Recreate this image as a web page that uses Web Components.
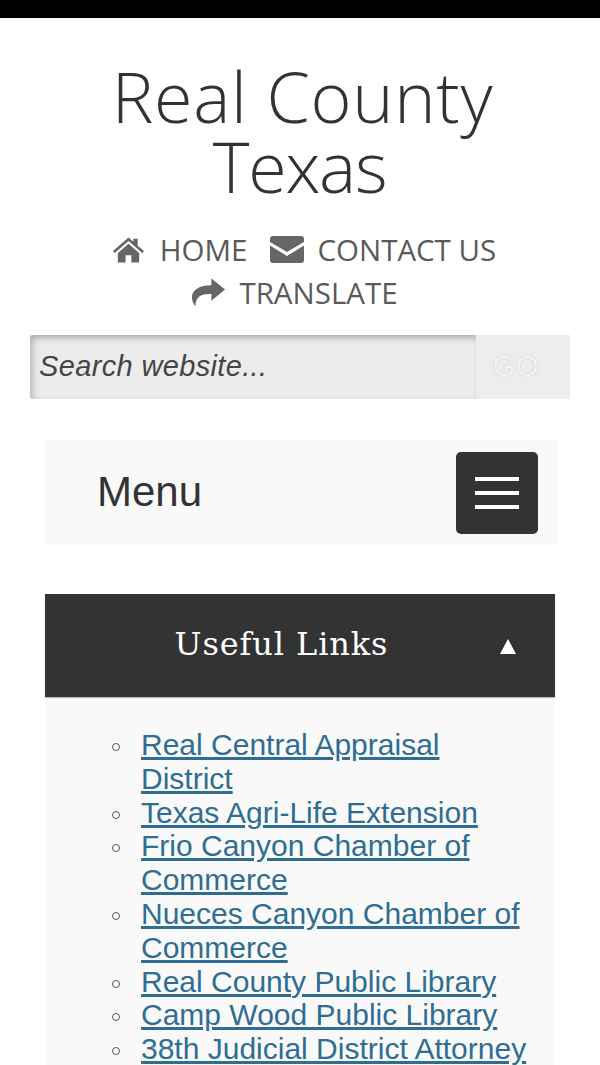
<!DOCTYPE html>
<html lang="en"><head><meta charset="utf-8"><title>Real County Texas</title>
<style>
html,body{margin:0;padding:0;background:#fff;height:1065px;overflow:hidden}
body{font-family:"Liberation Sans",sans-serif;color:#333}
</style></head><body>
<site-page>
  <site-header></site-header>
  <search-bar></search-bar>
  <menu-bar></menu-bar>
  <links-panel heading="Useful Links">
    <link-item>Real Central Appraisal District</link-item>
    <link-item>Texas Agri-Life Extension</link-item>
    <link-item>Frio Canyon Chamber of Commerce</link-item>
    <link-item>Nueces Canyon Chamber of Commerce</link-item>
    <link-item>Real County Public Library</link-item>
    <link-item>Camp Wood Public Library</link-item>
    <link-item>38th Judicial District Attorney</link-item>
  </links-panel>
</site-page>
<script>
function def(name, html, setup){
  customElements.define(name, class extends HTMLElement{
    constructor(){super();this.attachShadow({mode:'open'}).innerHTML=html;}
    connectedCallback(){ if(setup) setup(this); }
  });
}
def('site-page',`<style>:host{display:block;height:1065px;overflow:hidden;border-top:18px solid #000;box-sizing:border-box}</style><slot></slot>`);
def('site-header',`<style>
:host{display:block;text-align:center;padding-top:43px;font-family:"Open Sans",sans-serif}
h1{margin:0 auto;box-sizing:border-box;width:420px;padding-right:1px;font-weight:300;font-size:70px;line-height:70px;color:#333;letter-spacing:-1.2px;text-indent:6px}
h1::first-line{letter-spacing:.7px}
nav{margin-top:27px;font-size:29.5px;line-height:43px;color:#5a5a5a;display:flex;flex-direction:column;align-items:center}
.row{display:flex;align-items:center;height:43px}
a{white-space:nowrap;display:flex;align-items:center}
svg{fill:#666;display:block}
.r1{margin-left:9px}
.r2{margin-left:-11px}
.home svg{margin-right:16px}
.home{margin-right:23px}
.mail svg{margin-right:13px}
.tr svg{margin-right:14px}
</style>
<h1>Real County Texas</h1>
<nav>
<div class="row r1">
<a class="home"><svg width="31" height="26" viewBox="0 0 32 26"><path d="M16 0 L21 4.500V1.500h4.500V8.500L32 14l-1.800 2L16 3.800 1.800 16 0 14zM16 6.500 27 16v10h-8v-7.500h-6V26H5V16z"/></svg>HOME</a>
<a class="mail"><svg width="34" height="27" viewBox="0 0 34 27"><path d="M3 0h28a3 3 0 0 1 3 3v3L17 16 0 6V3a3 3 0 0 1 3-3zM0 9.500 17 20 34 9.500V24a3 3 0 0 1-3 3H3a3 3 0 0 1-3-3z"/></svg>CONTACT US</a>
</div>
<div class="row r2">
<a class="tr"><svg width="34" height="29" viewBox="0 0 35 29"><path d="M21 0 35 11.500 21 23v-7C12 16 5 17 4.500 29-3 19 1 7 21 7z"/></svg>TRANSLATE</a>
</div>
</nav>`);
def('search-bar',`<style>
:host{display:flex;height:64px;margin:21px 30px 0;background:#ededed;font-family:"Liberation Sans",sans-serif}
.i{flex:1;display:flex;align-items:center;padding:0 0 2px 9px;box-sizing:border-box;font-style:italic;font-size:29px;letter-spacing:.35px;color:#444;border-radius:4px 0 0 4px;box-shadow:inset 0 7px 7px -4px #aaa,inset 7px 0 7px -4px #bbb;background:#ececec}
.g{width:94px;display:flex;align-items:center;justify-content:center;font-size:29px;color:#f6f6f6;text-shadow:0 0 1px #aaa;padding:0 14px 2px 0;box-sizing:border-box;letter-spacing:1px}
</style><div class="i">Search website...</div><div class="g">GO</div>`);
def('menu-bar',`<style>
:host{display:flex;align-items:center;justify-content:space-between;height:105px;margin:41px 43px 0 44px;background:#f9f9f9;padding:0 19px 0 53px;box-sizing:border-box;font-family:"Liberation Sans",sans-serif;font-size:42px;color:#333}
span{margin-top:-2px}
button{width:82px;height:82px;background:#333;border:0;border-radius:5px;padding:0;display:flex;flex-direction:column;gap:10px;align-items:center;justify-content:center}
i{display:block;width:44px;height:4px;background:#fff}
</style><span>Menu</span><button aria-label="Menu"><i></i><i></i><i></i></button>`);
def('links-panel',`<style>
:host{display:block;margin:49px 45px 0;background:#f9f9f9;min-height:480px}
header{display:flex;align-items:center;height:103px;background:#333;color:#fff;font-family:"DejaVu Serif",serif;font-size:32px;letter-spacing:.9px;box-shadow:0 1px 1px #bbb}
h2{flex:1;margin:-4px 0 0;font:inherit;text-align:center;padding-left:18px}
.t{width:0;height:0;border-left:8.500px solid transparent;border-right:8.500px solid transparent;border-bottom:15px solid #fff;margin-right:39px;margin-top:2px}
ul{margin:0;padding:31px 25px 0 96px;list-style:none}
</style><header><h2 id="h"></h2><span class="t"></span></header><ul><slot></slot></ul>`, el=>{el.shadowRoot.getElementById('h').textContent=el.getAttribute('heading');});
def('link-item',`<style>
:host{display:list-item;list-style:none;position:relative;font-family:"Liberation Sans",sans-serif;font-size:30px;line-height:33.800px;color:#333}
:host::before{content:"";position:absolute;left:-29.500px;top:15px;width:6px;height:6px;border:1.500px solid #555;border-radius:50%;box-sizing:content-box}
a{color:#2f6d92;text-decoration:underline}
</style><a href="#"><slot></slot></a>`);
</script>
</body></html>
